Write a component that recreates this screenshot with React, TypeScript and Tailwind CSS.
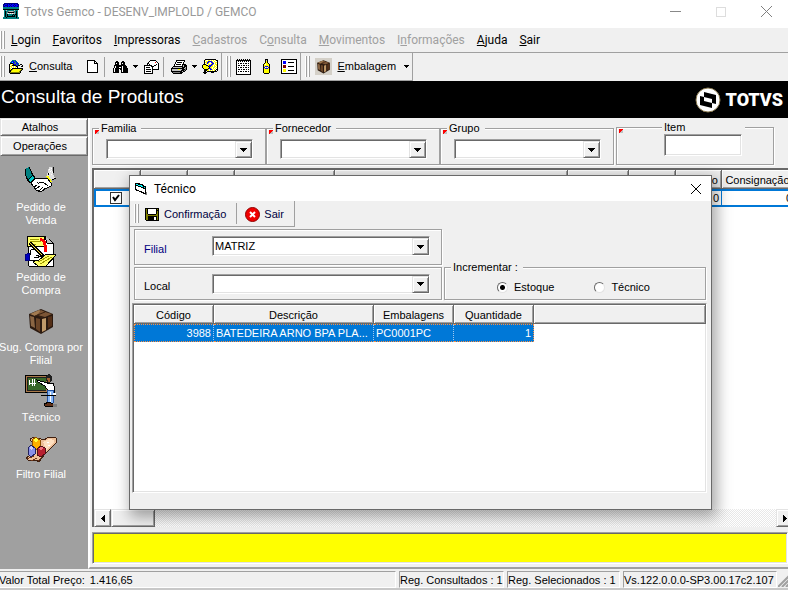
import React from "react";

const sunken =
  "border border-t-[#a0a0a0] border-l-[#a0a0a0] border-r-white border-b-white shadow-[inset_1px_1px_0_#696969,inset_-1px_-1px_0_#e3e3e3]";
const raised =
  "border border-t-[#e3e3e3] border-l-[#e3e3e3] border-r-[#696969] border-b-[#696969] bg-[#f0f0f0] shadow-[inset_1px_1px_0_#fff,inset_-1px_-1px_0_#a0a0a0]";
const etched = "border border-[#a0a0a0] shadow-[inset_1px_1px_0_#fff,1px_1px_0_#fff]";
const thCell =
  "h-[19px] overflow-hidden border-r border-b border-[#696969] bg-[#f0f0f0] p-0 pt-px font-normal leading-[14px] whitespace-nowrap shadow-[inset_1px_1px_0_#fff,inset_-1px_-1px_0_#a0a0a0]";

/* ---------- pixel helper ---------- */

const palette: Record<string, string> = {
  k: "#000000",
  w: "#ffffff",
  y: "#ffff00",
  o: "#808000",
  g: "#808080",
  l: "#c0c0c0",
  b: "#0000ff",
  n: "#000080",
  t: "#008080",
  c: "#00ffff",
  r: "#ff0000",
  m: "#800000",
  e: "#4f9a4f",
};

function Pixels({ rows }: { rows: string[] }) {
  const w = Math.max(...rows.map((r) => r.length));
  return (
    <svg width={w} height={rows.length} shapeRendering="crispEdges" aria-hidden="true" className="block shrink-0">
      {rows.flatMap((row, y) =>
        [...row].map((ch, x) =>
          palette[ch] ? <rect key={x + "-" + y} x={x} y={y} width="1" height="1" fill={palette[ch]} /> : null,
        ),
      )}
    </svg>
  );
}

const openFolder = [
  "....tttt........",
  "...tbbebt.......",
  "..tbcbbebt......",
  "..kkkbeebbt.....",
  ".kywykbbebt.kk..",
  ".kwykkkkbtkk..k.",
  ".kyywywykk...kk.",
  ".kwywywywk......",
  ".kywkkkkkkkkkkk.",
  ".kykoyyyyyyyyok.",
  ".kkoyyyyyyyyok..",
  ".kkyyyyyyyyok...",
  ".kooooooooook...",
  "..kkkkkkkkkk....",
];
const newDoc = [
  "kkkkkkkk...",
  "kwwwwwwkk..",
  "kwwwwwwkwk.",
  "kwwwwwwkkkk",
  "kwwwwwwwwwk",
  "kwwwwwwwwwk",
  "kwwwwwwwwwk",
  "kwwwwwwwwwk",
  "kwwwwwwwwwk",
  "kwwwwwwwwwk",
  "kwwwwwwwwwk",
  "kwwwwwwwwwk",
  "kkkkkkkkkkk",
];
const binoculars = [
  "...kk....kk....",
  "..kkkk..kkkk...",
  "..kwkk..kwkk...",
  "..kkkk..kkkk...",
  ".kkkkkkkkkkkk..",
  ".kwkkkkkkwkkkk.",
  ".kwkkkwwkwkkkk.",
  "kwkkkkkkkwkkkkk",
  "kwkkkkwkkwkkkkk",
  "kwkkkk..kwkkkkk",
  "kwkkkk..kwkkkkk",
  "kkkkkk..kkkkkkk",
];
const mailing = [
  "......kkkkkk...",
  ".....kwwwwwwk..",
  "....kwwwwwwrwk.",
  "...kkwwwwwwwwwk",
  "...kwkwwwwwwkwk",
  "kkkkkkkkwwkkwwk",
  "kwwwwwwkkkwwwwk",
  "kwkkkkwwkwwwwwk",
  "kwwwwwwwkwwwwwk",
  "kwkkkkkwkkkkkkk",
  "kwwwwwwwk......",
  "kwkkkkkwk......",
  "kwwwwwwwk......",
  "kkkkkkkkk......",
];
const printer = [
  ".....kkkkkkkkk..",
  ".....kwwwwwwwk..",
  "....kwkkkkkwk...",
  "....kwwwwwwwk...",
  "...kwkkkkkwkkkk.",
  "...kwwwwwwwklkkk",
  "..kkkkkkkkkklkkk",
  ".klllllllllkkklk",
  "kkkkkkkkkkkkklgk",
  "kllllllyyllkkkgk",
  "klllllllllkkkgk.",
  "kkkkkkkkkkklkk..",
  ".kgggggggkkk....",
  "..kkkkkkkkk.....",
];
const help = [
  "...kkkkkkkkkkk..",
  "..kywwyywywywykk",
  "..kwyybbbbywywwk",
  "..kyybbywbbywyyk",
  "..kwybywwybbwywk",
  ".kkkywyyybbywyyk",
  "kyyykkybbbywywyk",
  "kyyyyykbbyywyywk",
  "kyyyyyykyywyywyk",
  ".kyyyykbbywywywk",
  "..kkkkywbbywywkk",
  "..kkkyywywywykwk",
  "..kk.kkkkkkkkkk.",
  ".kkkk....kkk....",
  "..kk............",
];
const notepad = [
  ".k.k.k.k.k.k.k.",
  "kkkkkkkkkkkkkkk",
  "kwkwkwkwkwkwkwk",
  "kwwwwwwwwwwwwwk",
  "kwkwkkwkwkkwkwk",
  "kwwwwwwwwwwwwwk",
  "kwkkwkwkkwkwkwk",
  "kwwwwwwwwwwwwwk",
  "kwkwkkwkwkkwkwk",
  "kwwwwwwwwwwwwwk",
  "kwkkwkwkkwkwkwk",
  "kwwwwwwwwwwwwwk",
  "kwkwkkwkwkkwkwk",
  "kwwwwwwwwwwwwwk",
  "kwwwwwwwwwwwwwk",
  "kkkkkkkkkkkkkkk",
];
const bottle = [
  "...kkk..",
  "...klk..",
  "...kyk..",
  "...kyk..",
  "..kyyyk.",
  ".kywyyyk",
  ".kyyyyyk",
  ".kybbbyk",
  ".kbwywbk",
  ".kybbbyk",
  ".kyyyyyk",
  ".kyyyyyk",
  ".kyyyyyk",
  ".kyyyyyk",
  "..kkkkk.",
];
const listing = [
  "kkkkkkkkkkkkkkkk",
  "kwwwwwwwwwwwwwwk",
  "kwbbbwwwwwwwwwwk",
  "kwbbbwwkkkkkkwwk",
  "kwbbbwwwwwwwwwwk",
  "kwwwwwwwwwwwwwwk",
  "kwmmmwwwwwwwwwwk",
  "kwmmmwwkkkkkkwwk",
  "kwmmmwwwwwwwwwwk",
  "kwwwwwwwwwwwwwwk",
  "kwyyywwwwwwwwwwk",
  "kwyyywwkkkkkkwwk",
  "kwyyywwwwwwwwwwk",
  "kwwwwwwwwwwwwwwk",
  "kkkkkkkkkkkkkkkk",
];
const appIcon = [
  ".nnnnnnnnnnnnnn.",
  "nnbbnbnbnbbnbbnn",
  "nbnnnbbnbbnbnbbn",
  "nnbbnbnbnbbnbbnn",
  "tttttttttttttttt",
  "tttttttttttttttt",
  "kkkkkkkkkkkkkkkk",
  ".ttltttttttlttt.",
  ".tkttgllllgttkt.",
  ".tktgkkkkkkgtkt.",
  ".tktlwlwlwlltkt.",
  ".tktktttttktkkt.",
  ".tktkttttktktkt.",
  ".tktkkkkkkkktkt.",
  "tttktttttttttktt",
  "tttttttttttttttt",
];
const floppy = [
  "kkkkkkkkkkkkkk",
  "kokwwwwwwwwkok",
  "kokwwwwwwwwkkk",
  "kokwwwwwwwwkok",
  "kokwwwwwwwwkok",
  "kokwwwwwwwwkok",
  "kookkkkkkkkook",
  "kooooooooooook",
  "kookkkkkkkkkok",
  "kookkkkkkwwkok",
  "kookkkkkkwwkok",
  "kookkkkkkwwkok",
  ".kkkkkkkkkkkkk",
];
const formIcon = [
  "kkkkk.......",
  "kcckkkkk....",
  "kkkcccckk...",
  "kwwkkkcckkk.",
  "kwwwwwkkkck.",
  "kwwwwwwwkkk.",
  "kkwwwwwwwwk.",
  ".kkkwwwwwwk.",
  "....kkkwwwk.",
  "......kkkwkg",
  "........kkkg",
  "..........gg",
];

function Crate({ size }: { size: number }) {
  return (
    <svg width={size} height={size} viewBox="0 0 32 32" aria-hidden="true" className="block shrink-0">
      <path d="M4 9 16 4 28 9 28 22 16 29 5 23Z" fill="#2b1a10" />
      <path d="M5 9 14 5 19 7 10 11Z" fill="#a27a50" />
      <path d="M16 5 20 7 27 9 20 12 12 10Z" fill="#7d5636" />
      <path d="M5 11 9 12 10 23 6 21Z" fill="#8a6543" />
      <path d="M11 13 15 14 15 27 11 24Z" fill="#6b4528" />
      <path d="M17 14 21 13 21 25 17 27Z" fill="#c09a6a" />
      <path d="M23 12 27 11 27 21 23 23Z" fill="#553018" />
      <path d="M10 11 20 7M12 10 18 13" stroke="#3a2212" strokeWidth="1" />
    </svg>
  );
}

function Handshake() {
  return (
    <svg width="32" height="32" shapeRendering="crispEdges" aria-hidden="true">
      <path d="M0 4 4 2 6 6 8 11 3 16 1 11Z" fill="#008080" />
      <path d="M4 2 6 6 8 11M0 4 1 11 3 16" stroke="#000" fill="none" />
      <path d="M3 15 8 10 10 13 5 18Z" fill="#00c8c8" stroke="#000" />
      <path d="M22 10 24 2 27 2 28 9 31 14 26 15Z" fill="#e0e0e0" />
      <path d="M24 4h1M26 3h1M25 6h1M24 8h1M26 9h1M27 7h1M26 5h1" stroke="#fff" />
      <path d="M28 2v3l1 3M23 8v2" stroke="#000" fill="none" />
      <path d="M22 11 26 17" stroke="#ffff00" strokeWidth="2" />
      <path d="M27 15 31 13" stroke="#000" />
      <path d="M6 18 10 14 14 13 18 14 22 13 26 18 26 21 20 24 16 27 11 25Z" fill="#fff" stroke="#000" />
      <path d="M9 22 12 20M11 24 15 21M14 26 18 22M17 26 20 23M14 17 18 17 23 21M12 17 14 19" stroke="#000" fill="none" />
    </svg>
  );
}

function OrderForms() {
  return (
    <svg width="32" height="32" shapeRendering="crispEdges" aria-hidden="true">
      <path d="M3 2 21 2 28 8 28 31 4 31Z" fill="#fff" stroke="#000" />
      <path d="M20 1 22 8 28 8" fill="#c0c0c0" stroke="#000" />
      <path d="M2 1 19 1 20 11 3 12Z" fill="#ffff66" stroke="#000" />
      <path d="M5 4h9M5 6h11M5 9h6" stroke="#a09a00" />
      <path d="M15 4 19 6 20 10 20 17" fill="none" stroke="#ff0000" strokeWidth="3" />
      <path d="M8 27 22 19 31 20 21 31 13 31Z" fill="#ffff66" stroke="#000" />
      <path d="M13 27 24 21M15 29 27 22" stroke="#a09a00" />
      <path d="M6 15 11 13 15 17 18 22 14 25 4 25Z" fill="#fff" stroke="#000" />
      <path d="M5 8 18 21" stroke="#000" strokeWidth="3" />
      <path d="M5 8 17 20" stroke="#ffe040" />
      <path d="M11 20 16 22M9 22 14 23" stroke="#000" />
      <path d="M0 20 4 18 5 25 1 26Z" fill="#0000c0" stroke="#000080" />
    </svg>
  );
}

function Teacher() {
  return (
    <svg width="32" height="34" shapeRendering="crispEdges" aria-hidden="true">
      <rect x="0" y="1" width="23" height="18" fill="#000" />
      <rect x="1" y="2" width="21" height="16" fill="#a87848" />
      <rect x="2" y="3" width="19" height="14" fill="#202020" />
      <rect x="3" y="4" width="18" height="12" fill="#386828" />
      <path d="M4 6v5M7 5v7M9 5v7M4 9h7" stroke="#fff" />
      <path d="M12 6 22 9 28 9 30 15 29 20 23 17 20 12 13 8Z" fill="#fff" stroke="#000" />
      <path d="M21 2 24 0 27 2 27 7 24 9 21 7Z" fill="#202020" />
      <path d="M22 4h3v4h-2z" fill="#a06030" />
      <path d="M22 16 29 17 28 29 22 29Z" fill="#8ab8f8" stroke="#2050a0" />
      <path d="M25 18 25 28" stroke="#fff" />
      <path d="M16 21h15" stroke="#000" />
      <path d="M28 19h3v2h-3z" fill="#fff" />
      <path d="M19 30 24 28 28 30 28 32 20 32Z" fill="#603018" stroke="#000" />
      <path d="M28 31h4" stroke="#808080" strokeWidth="3" />
    </svg>
  );
}

function HandCubes() {
  return (
    <svg width="32" height="32" shapeRendering="crispEdges" aria-hidden="true">
      <path d="M5 7 9 5 19 8 24 5 31 6 31 11 26 16 20 22 14 30 11 28 3 28 1 26 8 21 12 15 6 9Z" fill="#eec09a" stroke="#402010" />
      <path d="M18 10 24 7 29 8 29 11 21 18Z" fill="#ffe0c0" />
      <path d="M23 13h2M22 10h2" stroke="#fff" />
      <path d="M2 27 9 24M6 29 12 26M13 29 17 25" stroke="#6a3418" strokeWidth="1" />
      <path d="M7 8 11 5 15 8 15 15 11 18 7 15Z" fill="#ffb000" stroke="#905000" />
      <path d="M8 8 11 6 14 8 11 10Z" fill="#ffff40" />
      <path d="M3 16 6 13 10 16 10 22 6 25 3 22Z" fill="#8890e8" stroke="#202060" />
      <path d="M4 16 6 14 9 16 6 18Z" fill="#c8ccff" />
      <path d="M12 17 16 14 20 16 20 22 16 25 12 23Z" fill="#b82030" stroke="#501018" />
      <path d="M13 17 16 15 19 16 16 18Z" fill="#f07078" />
    </svg>
  );
}

function Arrow({ dir = "down" }: { dir?: "down" | "left" | "right" }) {
  const rows =
    dir === "down"
      ? ["kkkkkkk", ".kkkkk.", "..kkk..", "...k..."]
      : dir === "left"
        ? ["...k", "..kk", ".kkk", "kkkk", ".kkk", "..kk", "...k"]
        : ["k...", "kk..", "kkk.", "kkkk", "kkk.", "kk..", "k..."];
  return <Pixels rows={rows} />;
}

function SmallArrow() {
  return <Pixels rows={["kkkkk", ".kkk.", "..k.."]} />;
}

function Combo({ label, id, value, className }: { label?: string; id?: string; value?: string; className: string }) {
  return (
    <div className={"relative h-5 " + className}>
      <select
        id={id}
        aria-label={label}
        className={"block h-5 w-full appearance-none rounded-none bg-white pl-[2px] text-[11px] leading-4 text-black outline-none " + sunken}
      >
        <option>{value ?? ""}</option>
      </select>
      <span className={"pointer-events-none absolute top-[2px] right-[1px] bottom-[1px] flex w-[17px] items-center justify-center " + raised}>
        <Arrow />
      </span>
    </div>
  );
}

function Grip() {
  return (
    <div className="flex gap-px self-stretch py-[3px]" aria-hidden="true">
      <span className="w-[2px] border-r border-[#a0a0a0] bg-white" />
      <span className="w-[2px] border-r border-[#a0a0a0] bg-white" />
    </div>
  );
}

const menu: [string, string, string, boolean][] = [
  ["", "L", "ogin", true],
  ["", "F", "avoritos", true],
  ["", "I", "mpressoras", true],
  ["", "C", "adastros", false],
  ["C", "o", "nsulta", false],
  ["", "M", "ovimentos", false],
  ["I", "n", "formações", false],
  ["", "A", "juda", true],
  ["", "S", "air", true],
];

const shortcuts = [
  { label: "Pedido de Venda", icon: <Handshake /> },
  { label: "Pedido de Compra", icon: <OrderForms /> },
  { label: "Sug. Compra por Filial", icon: <Crate size={32} /> },
  { label: "Técnico", icon: <Teacher /> },
  { label: "Filtro Filial", icon: <HandCubes /> },
];

const columns: [string, string][] = [
  ["", "w-[47px]"],
  ["Item", "w-[47px]"],
  ["Produto", "w-[47px]"],
  ["Código", "w-[100px]"],
  ["Descrição", "w-[233px]"],
  ["Reserva", "w-[61px]"],
  ["Físico", "w-[47px]"],
  ["Técnico", "w-[46px]"],
  ["Consignação", "w-[72px]"],
];

function RedMark() {
  return <Pixels rows={["rrrr", "rrrl", "rrll", "rlll"]} />;
}

function FilterGroup({ label }: { label: string }) {
  return (
    <fieldset className={"relative mt-[2px] h-[45px] min-w-0 basis-[174px] px-[13px] " + etched}>
      <legend className="-ml-[7px] bg-[#f0f0f0] pr-[5px] pl-[2px] leading-4">{label}</legend>
      <Combo label={label} className="mt-[3px] w-[147px]" />
      <span className="absolute -top-[6px] left-[2px]">
        <RedMark />
      </span>
    </fieldset>
  );
}

function TitleBar() {
  return (
    <header className="flex h-7 items-start bg-white pt-[3px] pl-[3px] font-[Roboto,sans-serif] text-xs leading-4 text-[#999]">
      <Pixels rows={appIcon} />
      <h1 className="ml-[5px] flex-1 pt-px">Totvs Gemco - DESENV_IMPLOLD / GEMCO</h1>
      <div className="flex items-center gap-[35px] pt-[3px] pr-[16px]">
        <button aria-label="Minimizar" className="flex h-[11px] w-[11px] items-center">
          <span className="h-px w-full bg-[#888]" />
        </button>
        <button aria-label="Maximizar" className="h-[10px] w-[10px] border border-[#ddd]" />
        <button aria-label="Fechar">
          <svg width="11" height="11" className="block">
            <path d="M0 0 11 11M11 0 0 11" stroke="#808080" />
          </svg>
        </button>
      </div>
    </header>
  );
}

function Toolbar() {
  return (
    <div className="flex h-7 items-stretch bg-[#f0f0f0]" role="toolbar">
      <div className="flex items-center border-r border-b border-[#a0a0a0] pr-[3px]">
        <Grip />
        <button className="ml-[3px] flex items-center gap-[5px]">
          <Pixels rows={openFolder} />
          <span>
            <u>C</u>onsulta
          </span>
        </button>
        <button aria-label="Novo" className="ml-[15px]">
          <Pixels rows={newDoc} />
        </button>
        <span className="mr-2 ml-[6px] h-5 w-px bg-[#a0a0a0]" />
        <button aria-label="Pesquisar" className="flex items-center gap-[5px]">
          <Pixels rows={binoculars} />
          <SmallArrow />
        </button>
        <button aria-label="Enviar" className="ml-[6px]">
          <Pixels rows={mailing} />
        </button>
        <span className="mr-[7px] ml-1 h-5 w-px bg-[#a0a0a0]" />
        <button aria-label="Imprimir" className="flex items-center gap-[5px]">
          <Pixels rows={printer} />
          <SmallArrow />
        </button>
        <button aria-label="Ajuda" className="ml-[5px]">
          <Pixels rows={help} />
        </button>
      </div>
      <div className="flex items-center border-r border-b border-[#a0a0a0] pr-[3px] pl-1">
        <Grip />
        <button aria-label="Notas" className="ml-[5px]">
          <Pixels rows={notepad} />
        </button>
        <button aria-label="Produto" className="ml-[11px]">
          <Pixels rows={bottle} />
        </button>
        <button aria-label="Lista" className="ml-[11px]">
          <Pixels rows={listing} />
        </button>
      </div>
      <div className="flex items-center border-r border-b border-[#a0a0a0] pr-[3px] pl-1">
        <Grip />
        <button className="ml-[5px] flex items-center gap-[5px]">
          <span className="bg-[#d4d0c8]">
            <Crate size={17} />
          </span>
          <span>
            <u>E</u>mbalagem
          </span>
          <span className="ml-[3px]">
            <SmallArrow />
          </span>
        </button>
      </div>
    </div>
  );
}

function Brand() {
  return (
    <div className="flex items-center gap-[5px] pr-[5px]">
      <svg width="26" height="26" viewBox="0 0 26 26" aria-hidden="true">
        <circle cx="13" cy="13" r="12" fill="#fff" stroke="#8a7a50" strokeWidth="1" />
        <path d="M9 5 21 8 21 17 17 16 17 21 5 18 5 9 9 10Z" fill="#000" />
        <path d="M9 10 17 12 17 16 9 14Z" fill="#fff" />
      </svg>
      <span className="font-[Roboto,sans-serif] text-lg leading-6 font-black text-white">TOTVS</span>
    </div>
  );
}

function Sidebar() {
  return (
    <nav className="flex w-[88px] shrink-0 flex-col bg-[#a0a0a0]">
      <button className={"h-[18px] leading-4 pr-2 " + raised}>Atalhos</button>
      <button className={"h-[20px] leading-4 pr-2 " + raised}>Operações</button>
      <ul className="flex flex-col gap-2 pt-[9px] pr-[6px]">
        {shortcuts.map((s) => (
          <li key={s.label}>
            <a href="#" className="flex flex-col items-center gap-1 text-center leading-[13px] text-white">
              <span className="flex h-8 items-center">{s.icon}</span>
              <span className={s.label.startsWith("Pedido") ? "w-[60px]" : "w-[86px]"}>{s.label}</span>
            </a>
          </li>
        ))}
      </ul>
    </nav>
  );
}

function ProductGrid() {
  return (
    <div className="mt-[3px] -mr-[6px] flex flex-1 flex-col border-t-2 border-l-2 border-[#696969] bg-white">
      <div className="flex-1 overflow-hidden">
        <table className="w-[700px] table-fixed border-separate border-spacing-0">
          <thead>
            <tr>
              {columns.map(([c, w]) => (
                <th key={c} scope="col" className={thCell + " " + w}>
                  {c}
                </th>
              ))}
            </tr>
          </thead>
          <tbody>
            <tr className="[&>td]:h-[18px] [&>td]:border-y-2 [&>td]:border-[#0078d7] [&>td]:p-0 [&>td]:pr-[2px] [&>td]:text-right [&>td]:leading-3">
              <td className="border-l-2">
                <span className="ml-[14px] grid h-3 w-3">
                  <input
                    type="checkbox"
                    defaultChecked
                    aria-label="Selecionar produto"
                    className="h-3 w-3 appearance-none border border-[#333] bg-white [grid-area:1/1]"
                  />
                  <svg width="12" height="12" className="pointer-events-none [grid-area:1/1]" aria-hidden="true">
                    <path d="M3 5 5 8 9 3" fill="none" stroke="#000" strokeWidth="2" />
                  </svg>
                </span>
              </td>
              <td />
              <td />
              <td />
              <td />
              <td />
              <td />
              <td className="border-r border-r-[#a0a0a0]">0</td>
              <td>0</td>
            </tr>
          </tbody>
        </table>
      </div>
      <div className="flex h-[18px] bg-[repeating-conic-gradient(#fff_0_25%,#e8e8e8_0_50%)] bg-[length:2px_2px]">
        <button aria-label="Rolar para a esquerda" className={"flex w-[17px] items-center justify-center " + raised}>
          <Arrow dir="left" />
        </button>
        <span className={"w-11 " + raised} />
        <span className="flex-1" />
        <button aria-label="Rolar para a direita" className={"flex w-[18px] items-center justify-center " + raised}>
          <Arrow dir="right" />
        </button>
      </div>
    </div>
  );
}

function TecnicoDialog() {
  return (
    <section
      role="dialog"
      aria-labelledby="dlg-title"
      className="absolute top-[175px] left-[129px] flex h-[335px] w-[583px] flex-col border border-[#696969] bg-[#f0f0f0] shadow-[3px_5px_14px_2px_rgba(0,0,0,0.35)]"
    >
      <header className="flex h-[25px] items-center bg-white pr-[9px] pl-[5px]">
        <Pixels rows={formIcon} />
        <h2 id="dlg-title" className="ml-[7px] flex-1 font-[Roboto,sans-serif] text-xs text-black">
          Técnico
        </h2>
        <button aria-label="Fechar">
          <svg width="12" height="12" className="block">
            <path d="M1 1 11 11M11 1 1 11" stroke="#000" />
          </svg>
        </button>
      </header>
      <div className="flex h-[26px] self-start border-r border-b border-[#a0a0a0] pl-1" role="toolbar">
        <Grip />
        <button className="ml-[6px] flex items-center gap-[5px] pt-px text-[#000040]">
          <Pixels rows={floppy} />
          Confirmação
        </button>
        <span className="my-[2px] mr-2 ml-[10px] w-px bg-[#a0a0a0]" />
        <button className="flex items-center gap-1 pt-px pr-[10px] text-[#000040]">
          <svg width="15" height="15" aria-hidden="true">
            <circle cx="7.5" cy="7.5" r="7" fill="#f00000" stroke="#900000" />
            <path d="M5 5 10 10M10 5 5 10" stroke="#fff" strokeWidth="2" />
          </svg>
          Sair
        </button>
      </div>
      <div className="flex items-end gap-[2px] pt-[2px] pr-[5px] pl-1">
        <div className="flex w-[308px] flex-col gap-[2px]">
          <div className={"flex h-9 items-center pb-[2px] pl-[9px] " + etched}>
            <label htmlFor="filial" className="w-[68px] pt-[6px] text-[#000080]">
              Filial
            </label>
            <Combo id="filial" value="MATRIZ" className="w-[218px]" />
          </div>
          <div className={"flex h-[33px] items-center pl-[9px] " + etched}>
            <label htmlFor="local" className="w-[68px] pt-[6px]">
              Local
            </label>
            <Combo id="local" className="w-[218px]" />
          </div>
        </div>
        <fieldset className={"h-[41px] min-w-0 flex-1 " + etched}>
          <legend className="ml-[6px] bg-[#f0f0f0] pr-[5px] pl-[2px] leading-4">Incrementar :</legend>
          <div className="flex gap-[40px] pt-1 pl-[52px]">
            {["Estoque", "Técnico"].map((o, i) => (
              <label key={o} className="flex items-center gap-[6px] leading-4">
                <input
                  type="radio"
                  name="incrementar"
                  defaultChecked={i === 0}
                  className="h-[11px] w-[11px] appearance-none rounded-full border border-t-[#696969] border-r-[#e3e3e3] border-b-[#e3e3e3] border-l-[#696969] bg-white checked:bg-[radial-gradient(circle,#000_2px,#fff_3px)]"
                />
                {o}
              </label>
            ))}
          </div>
        </fieldset>
      </div>
      <div className={"mr-1 mt-[3px] mb-[16px] ml-[2px] flex-1 overflow-hidden bg-white pt-px pl-px " + sunken}>
        <table className="w-full table-fixed border-separate border-spacing-0">
          <thead>
            <tr>
              <th scope="col" className={"w-20 " + thCell}>Código</th>
              <th scope="col" className={"w-[160px] " + thCell}>Descrição</th>
              <th scope="col" className={"w-20 " + thCell}>Embalagens</th>
              <th scope="col" className={"w-20 " + thCell}>Quantidade</th>
              <td className={thCell} />
            </tr>
          </thead>
          <tbody>
            <tr className="text-white [&>td]:h-[18px] [&>td]:overflow-hidden [&>td]:p-0 [&>td]:px-[2px] [&>td]:leading-4 [&>td]:whitespace-nowrap">
              <td className="border-y border-r border-l border-dotted border-[#ff9040] border-r-[#a0c8f0] bg-[#0078d7] text-right">3988</td>
              <td className="border-y border-r border-dotted border-[#ff9040] border-r-[#a0c8f0] bg-[#0078d7]">BATEDEIRA ARNO BPA PLA...</td>
              <td className="border-y border-r border-dotted border-[#ff9040] border-r-[#a0c8f0] bg-[#0078d7]">PC0001PC</td>
              <td className="border-y border-r border-dotted border-[#ff9040] bg-[#0078d7] text-right">1</td>
              <td />
            </tr>
          </tbody>
        </table>
      </div>
    </section>
  );
}

function StatusBar() {
  const cell = "h-[17px] border border-t-[#a0a0a0] border-l-[#a0a0a0] border-r-white border-b-white leading-4 whitespace-nowrap";
  return (
    <footer className="flex h-[21px] items-start gap-[3px] border-b-2 border-[#c8c8c8] bg-[#f0f0f0] pt-[2px]">
      <div className={"-ml-[3px] flex-1 pl-px " + cell}>
        Valor Total Preço: <span className="ml-[2px]">1.416,65</span>
      </div>
      <div className={"w-[105px] " + cell}>Reg. Consultados : 1</div>
      <div className={"w-[113px] " + cell}>Reg. Selecionados : 1</div>
      <div className={"w-[154px] " + cell}>Vs.122.0.0.0-SP3.00.17c2.107</div>
      <svg width="10" height="16" aria-hidden="true" className="-ml-[2px]">
        <path d="M0 16 12 4M4 16 12 8M8 16 12 12" stroke="#a0a0a0" strokeWidth="2" />
      </svg>
    </footer>
  );
}

export default function App() {
  return (
    <div className="relative flex min-h-screen flex-col overflow-hidden bg-[#f0f0f0] font-['Liberation_Sans',Arial,sans-serif] text-[11px] text-black">
      <TitleBar />
      <nav className="flex h-[25px] items-center gap-[6px] border-b border-[#a0a0a0] font-[Roboto,sans-serif] text-xs">
        <Grip />
        <ul className="flex gap-3">
          {menu.map(([a, u, b, on]) => (
            <li key={a + u + b}>
              <button disabled={!on} className="disabled:text-[#a0a0a0]">
                {a}
                <u>{u}</u>
                {b}
              </button>
            </li>
          ))}
        </ul>
      </nav>
      <Toolbar />
      <div className="flex h-[37px] items-center justify-between bg-black pl-px text-white">
        <h2 className="pb-[5px] text-[19px] leading-6">Consulta de Produtos</h2>
        <Brand />
      </div>
      <div className="flex flex-1">
        <Sidebar />
        <main className="flex min-w-0 flex-1 flex-col overflow-hidden border-b-2 border-l-2 border-b-[#a0a0a0] border-l-white pl-[2px]">
          <div className="flex items-start">
            <FilterGroup label="Familia" />
            <FilterGroup label="Fornecedor" />
            <FilterGroup label="Grupo" />
            <fieldset className={"relative mt-[2px] ml-[2px] h-[45px] w-[158px] min-w-0 pl-[47px] " + etched}>
              <legend className="-ml-[2px] w-[83px] bg-[#f0f0f0] pl-[2px] leading-[14px]">
                <label htmlFor="item">Item</label>
              </legend>
              <input id="item" className={"block h-[22px] w-[78px] bg-white px-1 outline-none " + sunken} />
              <span className="absolute -top-[5px] left-[2px]">
                <RedMark />
              </span>
            </fieldset>
          </div>
          <ProductGrid />
          <div className={"mt-[5px] mb-[3px] h-8 bg-[#ffff00] " + sunken} />
        </main>
      </div>
      <StatusBar />
      <TecnicoDialog />
    </div>
  );
}
